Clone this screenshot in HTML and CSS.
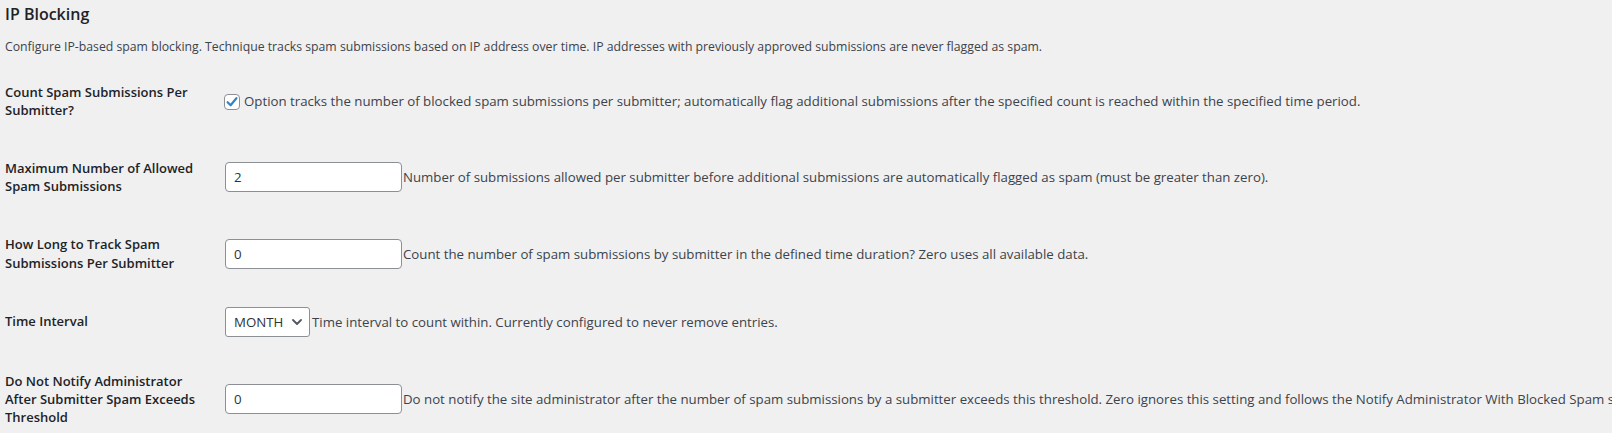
FILE: index.html
```html
<!DOCTYPE html>
<html lang="en">
<head>
<meta charset="utf-8">
<title>IP Blocking</title>
<link rel="stylesheet" href="styles.css">
</head>
<body>
<div class="wrap">
  <h2 class="title">IP Blocking</h2>
  <p class="intro">Configure IP-based spam blocking. Technique tracks spam submissions based on IP address over time. IP addresses with previously approved submissions are never flagged as spam.</p>
  <div class="form-table">
    <div class="row">
      <div class="label">Count Spam Submissions Per Submitter?</div>
      <div class="field">
        <span class="checkbox"><svg width="16" height="16" viewBox="0 0 16 16"><path d="M3.6 8.2 L6.6 11.3 L12.4 4.2" fill="none" stroke="#3582c4" stroke-width="2.2" stroke-linecap="round" stroke-linejoin="round"/></svg></span>
        <span class="desc">Option tracks the number of blocked spam submissions per submitter; automatically flag additional submissions after the specified count is reached within the specified time period.</span>
      </div>
    </div>
    <div class="row">
      <div class="label">Maximum Number of Allowed Spam Submissions</div>
      <div class="field">
        <input class="text-input" type="text" value="2">
        <span class="desc">Number of submissions allowed per submitter before additional submissions are automatically flagged as spam (must be greater than zero).</span>
      </div>
    </div>
    <div class="row">
      <div class="label">How Long to Track Spam Submissions Per Submitter</div>
      <div class="field">
        <input class="text-input" type="text" value="0">
        <span class="desc">Count the number of spam submissions by submitter in the defined time duration? Zero uses all available data.</span>
      </div>
    </div>
    <div class="row">
      <div class="label">Time Interval</div>
      <div class="field">
        <div class="select"><span>MONTH</span><svg width="10" height="6" viewBox="0 0 10 6"><path d="M1 1 L5 5 L9 1" fill="none" stroke="#50575e" stroke-width="1.8" stroke-linecap="round" stroke-linejoin="round"/></svg></div>
        <span class="desc">Time interval to count within. Currently configured to never remove entries.</span>
      </div>
    </div>
    <div class="row">
      <div class="label">Do Not Notify Administrator After Submitter Spam Exceeds Threshold</div>
      <div class="field">
        <input class="text-input" type="text" value="0">
        <span class="desc">Do not notify the site administrator after the number of spam submissions by a submitter exceeds this threshold. Zero ignores this setting and follows the Notify Administrator With Blocked Spam setting.</span>
      </div>
    </div>
  </div>
</div>
</body>
</html>
```

FILE: styles.css
```css
html, body {
  margin: 0;
  padding: 0;
  background: #f0f0f1;
  overflow: hidden;
}
body {
  font-family: "Open Sans", "Noto Sans", "Liberation Sans", sans-serif;
  color: #3c434a;
  font-size: 12px;
}
.wrap {
  padding: 0 0 0 5px;
}
.title {
  margin: 0;
  padding-top: 1px;
  font-size: 16px;
  line-height: 26px;
  font-weight: 600;
  color: #1d2327;
}
.intro {
  margin: 10.6px 0 0;
  line-height: 18px;
  font-size: 12.25px;
}
.form-table {
  margin-top: 7px;
}
.row {
  display: grid;
  grid-template-columns: 210px 1fr;
}
.label {
  box-sizing: border-box;
  padding: 20px 10px 20px 0;
  font-size: 13px;
  line-height: 18.2px;
  font-weight: 600;
  color: #1d2327;
}
.field {
  padding: 15px 10px;
  align-self: center;
  display: flex;
  align-items: center;
  white-space: nowrap;
  line-height: 18.2px;
}
.desc {
  font-size: 13.25px;
  color: #3c434a;
}
.checkbox {
  box-sizing: border-box;
  width: 16px;
  height: 16px;
  border: 1px solid #8c8f94;
  border-radius: 4px;
  background: #fff;
  display: flex;
  align-items: center;
  justify-content: center;
  margin: 2px 4px 0 -1px;
  flex: none;
}
.checkbox svg {
  display: block;
  margin: -1px;
}
.text-input {
  box-sizing: border-box;
  width: 177px;
  height: 30px;
  margin: 0 1px 0 0;
  padding: 0 8px;
  border: 1px solid #8c8f94;
  border-radius: 4px;
  background: #fff;
  font-family: inherit;
  font-size: 13.25px;
  color: #2c3338;
  flex: none;
}
.select {
  box-sizing: border-box;
  width: 85px;
  height: 30px;
  margin: 0 2px 0 0;
  padding: 0 8px;
  border: 1px solid #8c8f94;
  border-radius: 3px;
  background: #fff;
  display: flex;
  align-items: center;
  justify-content: space-between;
  font-size: 13.25px;
  color: #2c3338;
  flex: none;
}
.select svg {
  display: block;
  margin-right: -1px;
}
```
